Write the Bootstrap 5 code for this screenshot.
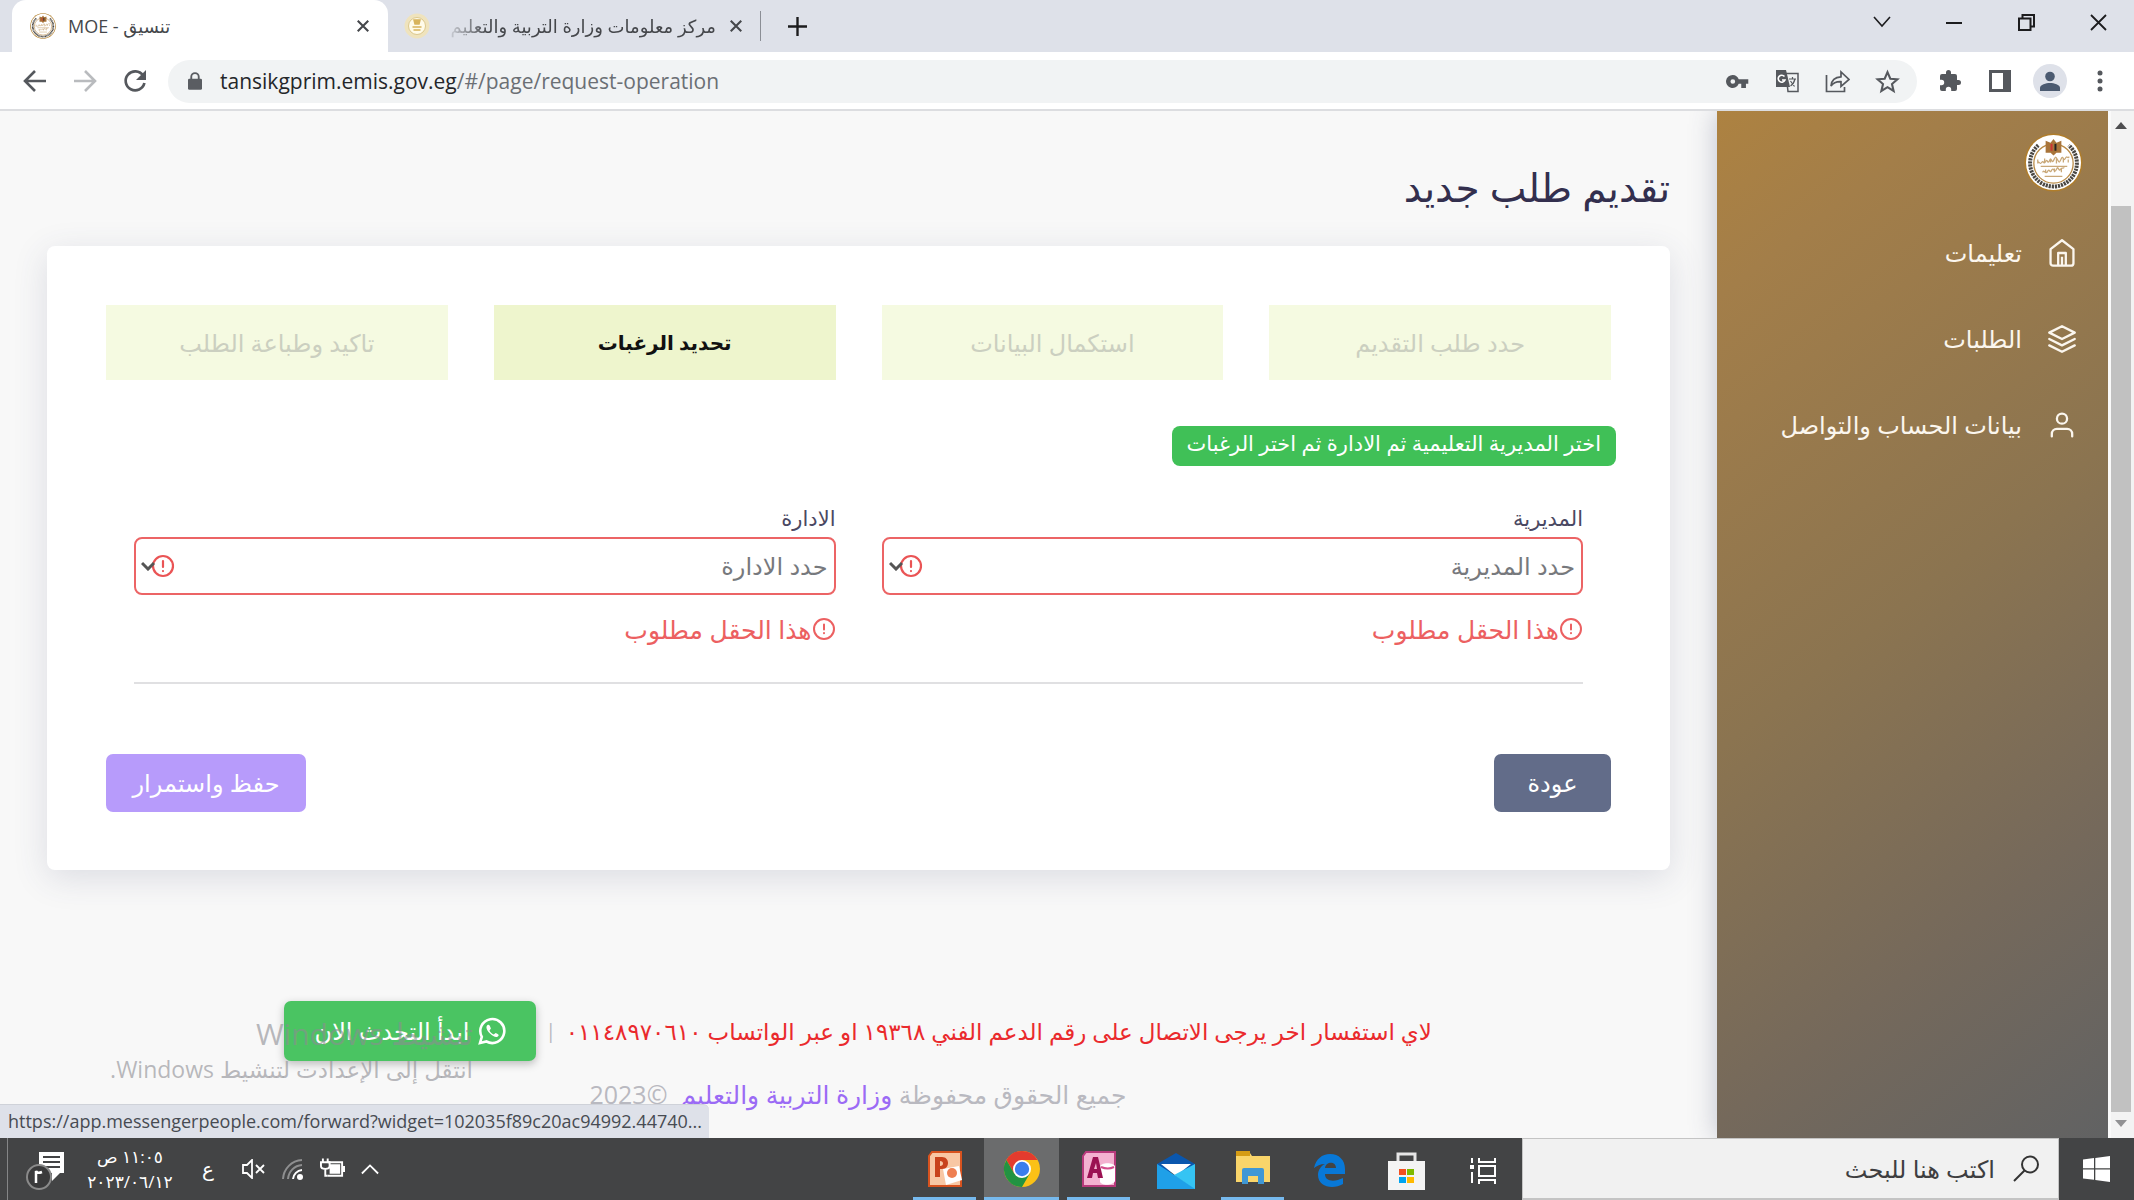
<!DOCTYPE html>
<html lang="ar">
<head>
<meta charset="utf-8">
<meta name="viewport" content="width=device-width, initial-scale=1">
<title>تنسيق - MOE</title>
<link href="https://cdn.jsdelivr.net/npm/bootstrap@5.3.0/dist/css/bootstrap.min.css" rel="stylesheet">
<script src="https://cdn.jsdelivr.net/npm/bootstrap@5.3.0/dist/js/bootstrap.bundle.min.js"></script>
<style>
  body { font-family: "Open Sans", "DejaVu Sans", sans-serif; font-size: 20px; color: #3b3b52; }
  button { font-family: inherit; }
  .plain-btn { background: none; border: 0; padding: 0; color: inherit; display: flex; align-items: center; justify-content: center; }
  svg { display: block; flex: none; }

  /* browser frame */
  .tab-strip { background: #dee1e9; height: 52px; padding-left: 12px; }
  .page-tab { height: 52px; gap: 12px; color: #45474b; }
  .tab-active { width: 376px; background: #fff; border-radius: 14px 14px 0 0; padding: 0 18px 0 18px; }
  .tab-idle { width: 372px; padding: 0 17px 0 15px; gap: 13px; }
  .tab-title { font-size: 18px; line-height: 28px; white-space: nowrap; overflow: hidden; }
  .tab-idle .tab-title { -webkit-mask-image: linear-gradient(to right, transparent, #000 44px); mask-image: linear-gradient(to right, transparent, #000 44px); }
  .tab-rule { width: 1px; height: 30px; background: #8b8e95; }
  .win-btn { width: 72px; height: 44px; color: #1c1c1e; }
  .tool-row { height: 59px; background: #fff; border-bottom: 2px solid #dcdde0; padding: 1px 9px 0 10px; }
  .tool-btn { width: 50px; height: 44px; color: #55585d; }
  .address { height: 43px; border-radius: 22px; background: #f1f3f4; padding: 0 5px 0 20px; }
  .url-text { font-size: 21px; line-height: 43px; color: #6b6f74; white-space: nowrap; text-decoration: none; padding-left: 18px; }
  .url-text span { color: #24262a; }
  .avatar { width: 34px; height: 34px; border-radius: 50%; background: #dee1e9; }

  /* page */
  .viewport-area { min-height: 0; overflow: hidden; background: #f8f8f8; }
  .page-main { padding: 43px 47px 0; min-width: 0; overflow: hidden; }
  .page-heading { font-size: 39px; line-height: 66px; font-weight: 400; color: #332f4e; margin: 0 0 26px; }
  .form-card { border: 0; border-radius: 8px; padding: 59px 59px 58px; box-shadow: 0 8px 34px rgba(60, 70, 110, .15); }
  .step-grid { gap: 46px; }
  .step-box { flex: 1 1 0; height: 75px; border-radius: 0; border: 0; font-size: 20px; padding: 0; background: #eef5cd; color: #111; }
  .step-box:disabled { background: #f5fae1; color: #cbcfc0; opacity: 1; font-size: 24px; }
  .hint-badge { background: #40c057; color: #fff; font-size: 21px; line-height: 28px; height: 40px; padding: 3px 15px; border-radius: 8px; margin: 46px -5px 0; }
  .field-area { padding: 0 28px; margin-top: 36px; }
  .field-grid { gap: 46px; padding-bottom: 37px; border-bottom: 2px solid #e0e0e2; }
  .field-grid label { font-size: 21px; line-height: 32px; color: #4a4862; margin: 0; }
  .field-area .field-grid .form-select.is-invalid:not([size]) { height: 58px; border: 2px solid #ec6465; border-radius: 8px; font-size: 24px; line-height: 36px; color: #77797d; padding: 0 6px 0 50px; margin-top: 3px;
    background-image: url("data:image/svg+xml,%3Csvg xmlns='http://www.w3.org/2000/svg' viewBox='0 0 14 10'%3E%3Cpath d='M1 2l6 6 6-6' fill='none' stroke='%23555' stroke-width='3'/%3E%3C/svg%3E"), url("data:image/svg+xml,%3Csvg xmlns='http://www.w3.org/2000/svg' viewBox='0 0 24 24' fill='none' stroke='%23ea5455' stroke-width='2.2' stroke-linecap='round'%3E%3Ccircle cx='12' cy='12' r='10'/%3E%3Cpath d='M12 7v6M12 17v.1'/%3E%3C/svg%3E");
    background-position: left 5px center, left 15px center; background-size: 14px 10px, 24px 24px; background-repeat: no-repeat; }
  .field-grid .invalid-feedback { color: #ec6061; font-size: 25px; line-height: 32px; margin-top: 18px; }
  .action-row { margin-top: 70px; }
  .action-row .btn { height: 58px; border: 0; border-radius: 7px; font-size: 24px; padding: 0 20px; color: #fff; }
  .back-btn, .back-btn:hover { background: #626c89; width: 117px; }
  .save-btn, .save-btn:disabled { background: #b79bfb; opacity: 1; width: 200px; }
  .page-foot { margin-top: 131px; padding-left: 237px; padding-right: 238px; color: #b9b9c0; }
  .contact-line { font-size: 23px; line-height: 60px; color: #ea2a2d; white-space: nowrap; }
  .chat-btn, .chat-btn:hover { background: #4ac462; color: #fff; width: 252px; height: 60px; border: 0; border-radius: 7px; font-size: 24px; box-shadow: 0 3px 8px rgba(0, 0, 0, .25); white-space: nowrap; padding: 0; }
  .rights-line { font-size: 25px; line-height: 36px; margin-top: 15px; }
  .rights-line a { color: #9b6bf5; text-decoration: none; }

  .side-menu { width: 391px; background: linear-gradient(142deg, #ad8241 0%, #a37e49 14%, #8b7450 48%, #75695b 76%, #616263 100%); box-shadow: 0 0 26px rgba(60, 70, 110, .3); padding: 22px 25px; flex: none; }
  .side-menu .nav-link { color: #fbf6ee; font-size: 24px; font-weight: 500; line-height: 30px; padding: 0 7px; height: 86px; gap: 26px; }
  .crest { margin-bottom: 18px; }

  .scroll-track { width: 26px; background: #f3f3f3; border-left: 3px solid #fafafa; padding: 10px 3px 10px 0; flex: none; }
  .scroll-grip { width: 20px; background: #c1c1c1; margin: 77px 0 0; }

  .os-notice { left: 106px; bottom: 53px; color: rgba(140, 140, 146, .6); pointer-events: none; width: 367px; white-space: nowrap; }
  .os-notice-a { font-size: 30px; line-height: 38px; }
  .os-notice-b { font-size: 23px; line-height: 32px; }
  .link-bubble { left: 0; bottom: 0; width: 709px; height: 34px; background: #dee1e9; border-top: 1px solid #cfd2d9; border-radius: 0 6px 0 0; font-size: 18px; line-height: 33px; padding-left: 8px; color: #474b52; white-space: nowrap; overflow: hidden; }

  /* taskbar */
  .os-bar { height: 62px; background: #434445; color: #fff; }
  .start-btn { width: 75px; }
  .os-search { width: 537px; background: #f1f1f1; border: 2px solid #c4c4c4; border-width: 1px 1px 2px; padding: 0 18px; gap: 16px; }
  .os-search input { background: none; border: 0; outline: 0; font-size: 24px; color: #3e3e40; flex: 1; min-width: 0; }
  .os-search input::placeholder { color: #3e3e40; opacity: 1; }
  .app-btn { width: 77px; }
  .app-btn.running > span, .app-btn.current > span { border-bottom: 3px solid #76b9ed; }
  .app-btn > span { width: 63px; height: 62px; padding-top: 3px; display: flex; align-items: center; justify-content: center; }
  .app-btn.current > span { width: 75px; background: #6b6c6d; }
  .tray { padding-left: 7px; }
  .os-clock { width: 96px; font-size: 17px; line-height: 25px; text-align: center; }
  .peek { width: 1px; background: #858687; }
  .tray-letter { font-size: 20px; }
</style>
</head>
<body class="vh-100 overflow-hidden d-flex flex-column m-0">

<svg width="0" height="0" class="position-absolute" aria-hidden="true">
  <defs>
    <g id="crest">
      <circle cx="30" cy="30" r="29.5" fill="#b07d2a"/>
      <circle cx="30" cy="30" r="28" fill="#fff"/>
      <path d="M14.500 12.500A23.800 23.800 0 1 0 45.500 12.500" fill="none" stroke="#4a4742" stroke-width="4" stroke-dasharray="2.200 .9"/>
      <circle cx="30" cy="31" r="20" fill="#fff" stroke="#b98a45" stroke-width="1.300"/>
      <path d="M22 8l5 2 3-4 3 4 5-2v12h-5l-3 3-3-3h-5z" fill="#a8743a"/>
      <path d="M27 11h2v7h-2z" fill="#c33"/><path d="M31 11h2v7h-2z" fill="#222"/>
      <path d="M14 31c1-4 2 2 4-1s2 3 4-1 2 4 4-1 2 4 4 0 2-5 4-1 2 3 4-1 2 4 4 0 2 1 4-2M14 27v4M21 26v4M27 27v3M33 26v5M40 26v4M45 27v3M19 40c1-4 3 3 5-1s2 3 4-1 3 4 5-1 2 3 4 0 2 0 4-2M22 37v3M31 36v4M38 36v4M17 34h27M21 44h18" fill="none" stroke="#c9a878" stroke-width="1.300"/>
    </g>
    <g id="alert-ring" fill="none" stroke="currentColor" stroke-width="2" stroke-linecap="round">
      <circle cx="12" cy="12" r="10"/><path d="M12 7.500v5M12 16v.2"/>
    </g>
  </defs>
</svg>

<header>
  <div class="tab-strip d-flex align-items-center">
    <div class="page-tab tab-active d-flex align-items-center">
      <svg width="26" height="26" viewBox="0 0 60 60"><use href="#crest"/></svg>
      <span class="tab-title flex-grow-1">MOE - تنسيق</span>
      <button class="plain-btn" aria-label="إغلاق"><svg width="14" height="14" viewBox="0 0 16 16" stroke="currentColor" stroke-width="2.400"><path d="M2 2l12 12M14 2L2 14"/></svg></button>
    </div>
    <div class="page-tab tab-idle d-flex align-items-center">
      <svg width="28" height="28" viewBox="0 0 28 28"><circle cx="14" cy="14" r="12.500" fill="#efe3bd"/><circle cx="14" cy="14" r="8.500" fill="#fffbe9" stroke="#dcc88e"/><path d="M11 8h6l-1 4h-4zM9.500 15h9M10.500 18h7" stroke="#d8b45c" stroke-width="1.500" fill="#d8b45c"/></svg>
      <span class="tab-title flex-grow-1" dir="rtl">مركز معلومات وزارة التربية والتعليم</span>
      <button class="plain-btn" aria-label="إغلاق"><svg width="14" height="14" viewBox="0 0 16 16" stroke="currentColor" stroke-width="2.400"><path d="M2 2l12 12M14 2L2 14"/></svg></button>
    </div>
    <div class="tab-rule"></div>
    <button class="plain-btn win-btn" aria-label="علامة تبويب جديدة"><svg width="19" height="19" viewBox="0 0 20 20" stroke="currentColor" stroke-width="2.500"><path d="M10 0v20M0 10h20"/></svg></button>
    <div class="d-flex ms-auto align-self-start">
      <button class="plain-btn win-btn" aria-label="بحث"><svg width="18" height="18" viewBox="0 0 18 18" fill="none" stroke="currentColor" stroke-width="1.600"><path d="M1 4l8 9 8-9"/></svg></button>
      <button class="plain-btn win-btn" aria-label="تصغير"><svg width="16" height="16" viewBox="0 0 16 16" stroke="currentColor" stroke-width="2"><path d="M0 9h16"/></svg></button>
      <button class="plain-btn win-btn" aria-label="استعادة"><svg width="17" height="17" viewBox="0 0 17 17" fill="none" stroke="currentColor" stroke-width="2"><path d="M1 4.500h11.500V16H1zM4.500 4V1H16v11.500h-3.500"/></svg></button>
      <button class="plain-btn win-btn" aria-label="إغلاق النافذة"><svg width="17" height="17" viewBox="0 0 17 17" stroke="currentColor" stroke-width="1.800"><path d="M1 1l15 15M16 1L1 16"/></svg></button>
    </div>
  </div>

  <div class="tool-row d-flex align-items-center">
    <button class="plain-btn tool-btn" aria-label="رجوع"><svg width="24" height="24" viewBox="0 0 24 24" fill="none" stroke="currentColor" stroke-width="2.600"><path d="M23 12H3M12 2L2 12l10 10"/></svg></button>
    <button class="plain-btn tool-btn" aria-label="تقدم"><svg width="24" height="24" viewBox="0 0 24 24" fill="none" stroke="#b9bbbe" stroke-width="2.600"><path d="M1 12h20M12 2l10 10-10 10"/></svg></button>
    <button class="plain-btn tool-btn" aria-label="إعادة تحميل"><svg width="24" height="24" viewBox="0 0 24 24"><path d="M20 6.500A9.500 9.500 0 1 0 21.400 14" fill="none" stroke="currentColor" stroke-width="2.700"/><path d="M23 1v10H13z" fill="currentColor"/></svg></button>
    <div class="address d-flex align-items-center flex-grow-1 ms-2">
      <svg width="14" height="20" viewBox="0 0 15 20"><path d="M3.500 8V5.500a4 4 0 0 1 8 0V8" fill="none" stroke="#5a5d62" stroke-width="2"/><rect x="0" y="7.500" width="15" height="12" rx="1.500" fill="#5a5d62"/></svg>
      <a class="url-text flex-grow-1" href="#"><span>tansikgprim.emis.gov.eg</span>/#/page/request-operation</a>
      <button class="plain-btn tool-btn" aria-label="كلمات المرور"><svg width="23" height="15" viewBox="0 0 24 16" fill="currentColor"><path fill-rule="evenodd" d="M7 1a7 7 0 1 0 6.300 9.500H16V15h5v-4.500h2.500v-5H13.300A7 7 0 0 0 7 1zm0 4.500a2.500 2.500 0 1 1 0 5 2.500 2.500 0 0 1 0-5z"/></svg></button>
      <button class="plain-btn tool-btn" aria-label="ترجمة"><svg width="24" height="24" viewBox="0 0 24 24"><path d="M11 4.500h12v18H13z" fill="#f1f3f4" stroke="currentColor" stroke-width="1.500"/><path d="M1 1h10l4 17H1z" fill="currentColor"/><path d="M9.500 7.500A3.500 3.500 0 1 0 10 11H7" fill="none" stroke="#fff" stroke-width="1.600"/><path d="M14 10h7M17.500 8v2M20 10c-1 4-3 6-4.500 7M15.500 12l4 5.500" fill="none" stroke="currentColor" stroke-width="1.200"/></svg></button>
      <button class="plain-btn tool-btn" aria-label="مشاركة"><svg width="25" height="24" viewBox="0 0 25 24" fill="none" stroke="currentColor" stroke-width="1.700"><path d="M1.500 6v16.500h18V18"/><path d="M6 17c.5-6 4-9 10-9.200V3l8 7.500-8 7v-4.800c-5-.2-8 1.300-10 4.300z"/></svg></button>
      <button class="plain-btn tool-btn" aria-label="إشارة مرجعية"><svg width="25" height="25" viewBox="0 0 24 24" fill="none" stroke="currentColor" stroke-width="2"><path d="M12 3l2.700 6.300 6.800.6-5.200 4.500 1.600 6.700L12 17.500l-5.900 3.600 1.600-6.700L2.500 9.900l6.800-.6z"/></svg></button>
    </div>
    <div class="d-flex ms-2">
      <button class="plain-btn tool-btn" aria-label="الإضافات"><svg width="24" height="24" viewBox="0 0 24 24" fill="currentColor"><path d="M20.500 11H19V7a2 2 0 0 0-2-2h-4V3.500a2.500 2.500 0 0 0-5 0V5H4a2 2 0 0 0-2 2v3.800h1.500a2.700 2.700 0 0 1 0 5.400H2V20a2 2 0 0 0 2 2h3.800v-1.500a2.700 2.700 0 0 1 5.400 0V22H17a2 2 0 0 0 2-2v-4h1.500a2.500 2.500 0 0 0 0-5z"/></svg></button>
      <button class="plain-btn tool-btn" aria-label="اللوحة الجانبية"><svg width="22" height="22" viewBox="0 0 22 22"><rect x="1.500" y="1.500" width="19" height="19" fill="none" stroke="currentColor" stroke-width="3"/><rect x="14" y="1" width="7" height="20" fill="currentColor"/></svg></button>
      <button class="plain-btn tool-btn" aria-label="الملف الشخصي"><span class="avatar d-flex align-items-center justify-content-center"><svg width="20" height="20" viewBox="0 0 20 20" fill="#4b5a70"><circle cx="10" cy="5.500" r="4.800"/><path d="M0 20v-3c0-3.500 6-5 10-5s10 1.500 10 5v3z"/></svg></span></button>
      <button class="plain-btn tool-btn" aria-label="القائمة"><svg width="6" height="22" viewBox="0 0 6 22" fill="currentColor"><circle cx="3" cy="3" r="2.500"/><circle cx="3" cy="11" r="2.500"/><circle cx="3" cy="19" r="2.500"/></svg></button>
    </div>
  </div>
</header>

<div class="viewport-area d-flex flex-grow-1 position-relative">
  <main class="page-main flex-grow-1" dir="rtl">
    <h1 class="page-heading">تقديم طلب جديد</h1>
    <section class="card form-card">
      <div class="step-grid d-flex">
        <button class="btn step-box" disabled>حدد طلب التقديم</button>
        <button class="btn step-box" disabled>استكمال البيانات</button>
        <button class="btn step-box fw-bold">تحديد الرغبات</button>
        <button class="btn step-box" disabled>تاكيد وطباعة الطلب</button>
      </div>
      <div class="d-flex"><span class="hint-badge">اختر المديرية التعليمية ثم الادارة ثم اختر الرغبات</span></div>
      <form class="field-area">
        <div class="field-grid d-flex">
          <div class="w-50">
            <label for="directorate" class="d-block">المديرية</label>
            <select id="directorate" class="form-select is-invalid"><option>حدد المديرية</option></select>
            <div class="invalid-feedback d-flex align-items-center"><svg width="24" height="24" viewBox="0 0 24 24"><use href="#alert-ring"/></svg>هذا الحقل مطلوب</div>
          </div>
          <div class="w-50">
            <label for="department" class="d-block">الادارة</label>
            <select id="department" class="form-select is-invalid"><option>حدد الادارة</option></select>
            <div class="invalid-feedback d-flex align-items-center"><svg width="24" height="24" viewBox="0 0 24 24"><use href="#alert-ring"/></svg>هذا الحقل مطلوب</div>
          </div>
        </div>
      </form>
      <div class="action-row d-flex justify-content-between">
        <button class="btn back-btn">عودة</button>
        <button class="btn save-btn" disabled>حفظ واستمرار</button>
      </div>
    </section>
    <footer class="page-foot">
      <div class="d-flex align-items-center justify-content-between">
        <span class="contact-line">لاي استفسار اخر يرجى الاتصال على رقم الدعم الفني ١٩٣٦٨ او عبر الواتساب ٠١١٤٨٩٧٠٦١٠</span>
        <span>|</span>
        <button class="btn chat-btn d-flex align-items-center justify-content-center gap-2">
          <svg width="28" height="28" viewBox="0 0 28 28" fill="none" stroke="#fff" stroke-width="2.600"><path d="M2 26l1.800-6.200A12 12 0 1 1 8.500 24.500z"/><path d="M9.500 8c-2 1.500-1 5 2.500 8.500s7 4.500 8.500 2.200c.6-1-.3-1.500-2.800-2.700l-2 1.600c-2-1-3.500-2.500-4.200-4.200l1.400-1.800C12 8.500 11 7 9.500 8z" fill="#fff" stroke="none"/></svg>
          ابدأ التحدث الان
        </button>
      </div>
      <div class="rights-line text-center">جميع الحقوق محفوظة <a href="#">وزارة التربية والتعليم</a> &nbsp;<bdi dir="ltr">2023©</bdi></div>
    </footer>
  </main>

  <nav class="side-menu" dir="rtl">
    <svg class="crest" width="59" height="59" viewBox="0 0 60 60"><use href="#crest"/></svg>
    <div class="nav flex-column">
      <a class="nav-link d-flex align-items-center" href="#"><svg width="28" height="28" viewBox="1 1 22 22" fill="none" stroke="currentColor" stroke-width="1.800" stroke-linejoin="round"><path d="M3 9l9-7 9 7v11a2 2 0 0 1-2 2H5a2 2 0 0 1-2-2z"/><path d="M9 22V12h6v10M12 22v-7"/></svg>تعليمات</a>
      <a class="nav-link d-flex align-items-center" href="#"><svg width="28" height="28" viewBox="1 1 22 22" fill="none" stroke="currentColor" stroke-width="1.800" stroke-linejoin="round" stroke-linecap="round"><path d="M12 2L2 7l10 5 10-5zM2 17l10 5 10-5M2 12l10 5 10-5"/></svg>الطلبات</a>
      <a class="nav-link d-flex align-items-center" href="#"><svg width="28" height="28" viewBox="1 1 22 22" fill="none" stroke="currentColor" stroke-width="1.800" stroke-linecap="round"><path d="M20 21v-2a4 4 0 0 0-4-4H8a4 4 0 0 0-4 4v2"/><circle cx="12" cy="7" r="4"/></svg>بيانات الحساب والتواصل</a>
    </div>
  </nav>

  <div class="scroll-track d-flex flex-column align-items-center">
    <svg width="12" height="8" viewBox="0 0 12 8"><path d="M0 8l6-7 6 7z" fill="#4e4e50"/></svg>
    <div class="scroll-grip flex-grow-1 mb-2"></div>
    <svg width="12" height="8" viewBox="0 0 12 8"><path d="M0 0l6 7 6-7z" fill="#919193"/></svg>
  </div>

  <div class="os-notice position-absolute" dir="rtl">
    <div class="os-notice-a">تنشيط Windows</div>
    <div class="os-notice-b">انتقل إلى الإعدادت لتنشيط Windows.</div>
  </div>
  <div class="link-bubble position-absolute">https://app.messengerpeople.com/forward?widget=102035f89c20ac94992.44740...</div>
</div>

<footer class="os-bar d-flex flex-none" dir="rtl">
  <button class="plain-btn start-btn" aria-label="ابدأ"><svg width="27" height="26" viewBox="0 0 27 26" fill="#fff"><path d="M0 3.500l11-1.400v10.200H0zM12.300 1.900L27 0v12.300H12.300zM0 13.600h11v10.200L0 22.400zM12.300 13.600H27V26l-14.700-1.900z"/></svg></button>
  <div class="os-search d-flex align-items-center">
    <svg width="27" height="27" viewBox="0 0 27 27" fill="none" stroke="#333" stroke-width="2"><circle cx="17" cy="9.500" r="8"/><path d="M11.500 15.500L1 26"/></svg>
    <input type="text" placeholder="اكتب هنا للبحث" aria-label="بحث">
  </div>
  <div class="d-flex">
    <button class="plain-btn app-btn" aria-label="عرض المهام"><span><svg width="27" height="26" viewBox="0 0 27 26" fill="none" stroke="#fff" stroke-width="2"><path d="M2 0v5M2 14v11M9 0v4h16V0M9 26v-4h16v4M9 8h16v10H9z"/><path d="M0 7h4v4H0z" fill="#fff" stroke="none"/></svg></span></button>
    <button class="plain-btn app-btn" aria-label="المتجر"><span><svg width="37" height="38" viewBox="0 0 37 38"><path d="M10 11V2h17v9" fill="none" stroke="#e6e6e6" stroke-width="3"/><path d="M0 9h37v29H0z" fill="#f4f4f4"/><path d="M11 17h7v6h-7z" fill="#f25022"/><path d="M19 17h7v6h-7z" fill="#7fba00"/><path d="M11 25h7v6h-7z" fill="#00a4ef"/><path d="M19 25h7v6h-7z" fill="#ffb900"/></svg></span></button>
    <button class="plain-btn app-btn" aria-label="Edge"><span><svg width="32" height="33" viewBox="0 0 32 33"><path fill-rule="evenodd" d="M0 14C2 5 8 0 16 0c9 0 15 6 15 15v5H11c0 8 10 8 18 4v6c-10 6-25 3-25-9 0-5 3-9 7-11-5 0-8 2-11 4zm11 0h11c0-7-10-7-11 0z" fill="#0878d7"/></svg></span></button>
    <button class="plain-btn app-btn running" aria-label="مستكشف الملفات"><span><svg width="34" height="36" viewBox="0 0 34 36"><path d="M0 2h14l2 3h18v26H0z" fill="#f9d56a"/><path d="M0 0h14v5H0z" fill="#d59c14"/><path d="M6 33V19q0-2 2-2h18q2 0 2 2v14h-6v-8H12v8z" fill="#3f97d4"/></svg></span></button>
    <button class="plain-btn app-btn" aria-label="البريد"><span><svg width="38" height="36" viewBox="0 0 38 36"><path d="M0 11L19 0l19 11v8H0z" fill="#0a57ae"/><path d="M4 11h30L19 23z" fill="#fff"/><path d="M0 11l38 24V36H0z" fill="#1fa0e8"/><path d="M38 11v25L17 22z" fill="#35c4f3"/></svg></span></button>
    <button class="plain-btn app-btn running" aria-label="Access"><span><svg width="34" height="36" viewBox="0 0 34 36"><path d="M4 1h29v34H1V5z" fill="#f3b1d0" stroke="#b83a7c" stroke-width="2"/><path d="M18 16c0-5 15-5 15 0v14c-2 5-15 5-15 0z" fill="#fff"/><path d="M5 27l6-21h5l5 21h-5l-1-5h-4l-1 5zm7-9h3l-1-6z" fill="#9b1152" fill-rule="evenodd"/><path d="M19 16q7 3 13 0" stroke="#d34c8c" stroke-width="2" fill="none"/></svg></span></button>
    <button class="plain-btn app-btn current" aria-label="Chrome"><span><svg width="38" height="38" viewBox="0 0 38 38"><circle cx="19" cy="19" r="18" fill="#fbc116"/><path d="M3.400 10A18 18 0 0 1 34.600 10H19L11.200 23.500z" fill="#e33b2e"/><path d="M3.400 10A18 18 0 0 0 19 37l7.800-13.500L19 27l-7.800-3.500z" fill="#229342"/><circle cx="19" cy="19" r="9" fill="#fff"/><circle cx="19" cy="19" r="7.200" fill="#3b7ded"/></svg></span></button>
    <button class="plain-btn app-btn running" aria-label="PowerPoint"><span><svg width="34" height="36" viewBox="0 0 34 36"><path d="M4 1h29v34H1V5z" fill="#f8c7a4" stroke="#d8531f" stroke-width="2"/><path d="M15 18l16-3 3 14-16 5z" fill="#fff"/><circle cx="24" cy="22" r="5" fill="#ee7f52"/><path d="M7 26V6h7c8 0 8 12 0 12h-2v8zm5-16v5c4 0 4-5 0-5z" fill="#c8431c" fill-rule="evenodd"/></svg></span></button>
  </div>
  <div class="tray d-flex align-items-center me-auto" dir="ltr">
    <div class="peek align-self-stretch"></div>
    <button class="plain-btn px-3" aria-label="الإشعارات"><svg width="42" height="44" viewBox="0 0 42 44"><path d="M15 5h25v21h-4l-8 8v-8H15z" fill="#fff"/><path d="M19 10h17M19 15h17M19 20h17" stroke="#434445" stroke-width="2"/><circle cx="15" cy="30" r="12" fill="#3a3a3b" stroke="#8a8a8a" stroke-width="2"/><path d="M12 36V24q1 3 6 1" fill="none" stroke="#fff" stroke-width="2.500"/></svg></button>
    <div class="os-clock" dir="rtl"><div>١١:٠٥ ص</div><div>٢٠٢٣/٠٦/١٢</div></div>
    <span class="tray-letter px-4">ع</span>
    <div class="d-flex align-items-center gap-3 ps-1">
      <svg width="24" height="20" viewBox="0 0 24 20" fill="none" stroke="#fff" stroke-width="1.800"><path d="M1 6v8h4l5 5V1L5 6zM14 6l8 8M22 6l-8 8"/></svg>
      <svg width="22" height="22" viewBox="0 0 22 22" fill="none" stroke-width="2"><path d="M1 21A20 20 0 0 1 20 2M6 21A15 15 0 0 1 20 7" stroke="#8e8f90"/><path d="M11 21a10 10 0 0 1 9-9" stroke="#fff"/><circle cx="18" cy="19" r="3" fill="#fff"/></svg>
      <svg width="25" height="22" viewBox="0 0 26 22" fill="none" stroke="#fff" stroke-width="2"><path d="M8 4h15v14H8M25 8v6M3 0v4M8 0v4"/><path d="M1 4h9v4q0 3-4.500 3T1 8zM5.500 10v8H8"/><path d="M11 7h9v8h-9z" fill="#fff"/></svg>
      <svg width="18" height="12" viewBox="0 0 20 12" fill="none" stroke="#fff" stroke-width="2"><path d="M1 11l9-9 9 9"/></svg>
    </div>
  </div>
</footer>
</body>
</html>
